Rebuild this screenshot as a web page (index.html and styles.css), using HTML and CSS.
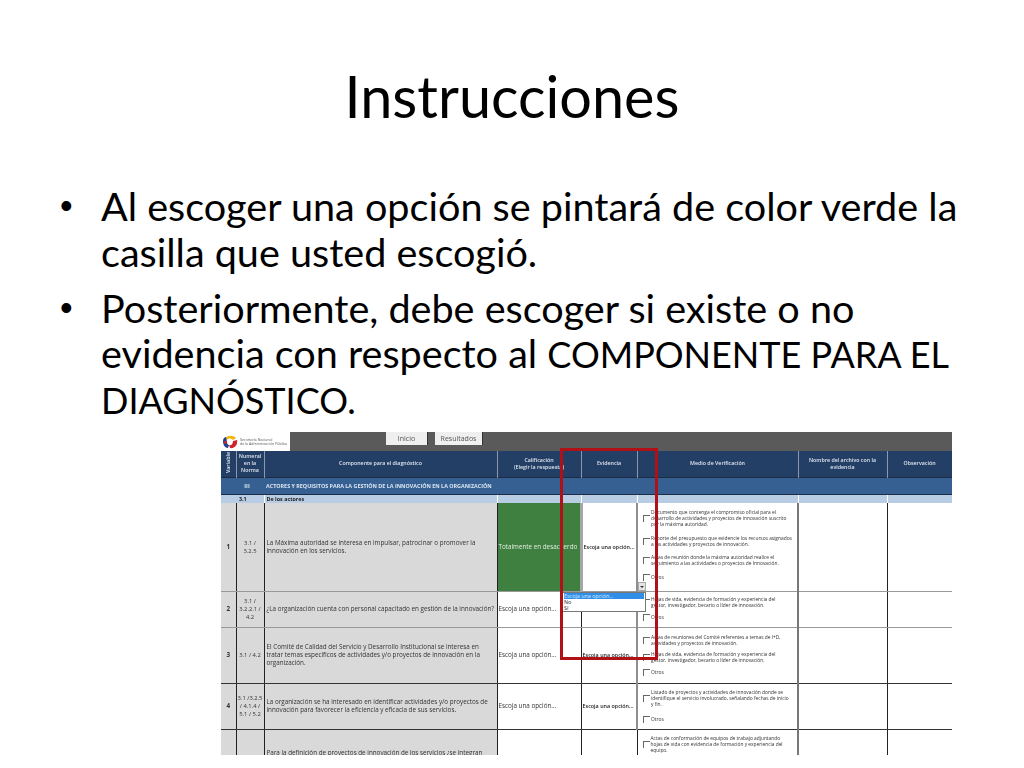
FILE: index.html
```html
<!DOCTYPE html>
<html lang="es">
<head>
<meta charset="utf-8">
<title>Instrucciones</title>
<link rel="stylesheet" href="styles.css">
</head>
<body>
<main class="slide">
  <h1 class="title">Instrucciones</h1>
  <ul class="bullets">
    <li>Al escoger una opción se pintará de color verde la casilla que usted escogió.</li>
    <li>Posteriormente, debe escoger si existe o no evidencia con respecto al <span class="caps">COMPONENTE PARA EL DIAGNÓSTICO.</span></li>
  </ul>
  <figure class="sheet">
    <div class="topbar">
      <div class="logo">
        <svg class="logo-mark" viewBox="0 0 16 14" width="16" height="14" aria-hidden="true">
          <path d="M3 4C5 0 11 0 14 3L11 5C9 3 6 3 5 5Z" fill="#f2b705"/>
          <path d="M1 6C1 3 3 2 4 2L5 7C5 9 6 10 7 10L6 13C3 13 1 10 1 6Z" fill="#1f3f94"/>
          <path d="M7 10C9 11 11 9 11 6L15 5C16 9 13 14 8 13Z" fill="#d2232a"/>
          <circle cx="3.4" cy="7.2" r="1.5" fill="#d2232a"/>
        </svg>
        <span class="logo-text">Secretaría Nacional<br>de la Administración Pública</span>
      </div>
      <div class="tabs">
        <span class="tab tab-first">Inicio</span>
        <span class="tab tab-second">Resultados</span>
      </div>
    </div>
    <table class="grid">
      <colgroup>
        <col class="c1"><col class="c2"><col class="c3"><col class="c4"><col class="c5"><col class="c6"><col class="c7"><col class="c8">
      </colgroup>
      <thead>
        <tr class="r-head">
          <th><span class="vertical">Variable</span></th>
          <th>Numeral<br>en la<br>Norma</th>
          <th>Componente para el diagnóstico</th>
          <th>Calificación<br>(Elegir la respuesta)</th>
          <th>Evidencia</th>
          <th>Medio de Verificación</th>
          <th>Nombre del archivo con la<br>evidencia</th>
          <th>Observación</th>
        </tr>
      </thead>
      <tbody>
        <tr class="r-section">
          <td colspan="2" class="sec-num sec-iii">III</td>
          <td colspan="2">ACTORES Y REQUISITOS PARA LA GESTIÓN DE LA INNOVACIÓN EN LA ORGANIZACIÓN</td>
          <td></td><td></td><td></td><td></td>
        </tr>
        <tr class="r-sub">
          <td colspan="2" class="sec-num">3.1</td>
          <td>De los actores</td>
          <td></td><td></td><td></td><td></td><td></td>
        </tr>
        <tr class="r1">
          <td class="gray num">1</td>
          <td class="gray ctr">3.1 /<br>3.2.5</td>
          <td class="gray desc">La Máxima autoridad se interesa en impulsar, patrocinar o promover la innovación en los servicios.</td>
          <td class="green">Totalmente en desacuerdo</td>
          <td class="ev">Escoja una opción...</td>
          <td class="medio">
            <div class="chk">Documento que contenga el compromiso oficial para el<br>desarrollo de actividades y proyectos de innovación suscrito<br>por la máxima autoridad.</div>
            <div class="chk">Reporte del presupuesto que evidencie los recursos asignados<br>a las actividades y proyectos de innovación.</div>
            <div class="chk">Actas de reunión donde la máxima autoridad realice el<br>seguimiento a las actividades o proyectos de Innovación.</div>
            <div class="chk">Otros</div>
          </td>
          <td></td><td></td>
        </tr>
        <tr class="r2">
          <td class="gray num">2</td>
          <td class="gray ctr">3.1 /<br>3.2.2.1 /<br>4.2</td>
          <td class="gray desc single">¿La organización cuenta con personal capacitado en gestión de la innovación?</td>
          <td class="opt">Escoja una opción...</td>
          <td class="ev">Escoja una opción...</td>
          <td class="medio">
            <div class="chk">Hojas de vida, evidencia de formación y experiencia del<br>gestor, investigador, becario o líder de innovación.</div>
            <div class="chk">Otros</div>
          </td>
          <td></td><td></td>
        </tr>
        <tr class="r3">
          <td class="gray num">3</td>
          <td class="gray ctr">3.1 / 4.2</td>
          <td class="gray desc">El Comité de Calidad del Servicio y Desarrollo Institucional se interesa en tratar temas específicos de actividades y/o proyectos de innovación en la organización.</td>
          <td class="opt">Escoja una opción...</td>
          <td class="ev">Escoja una opción...</td>
          <td class="medio">
            <div class="chk">Actas de reuniones del Comité referentes a temas de I+D,<br>actividades y proyectos de innovación.</div>
            <div class="chk">Hojas de vida, evidencia de formación y experiencia del<br>gestor, investigador, becario o líder de innovación.</div>
            <div class="chk">Otros</div>
          </td>
          <td></td><td></td>
        </tr>
        <tr class="r4">
          <td class="gray num">4</td>
          <td class="gray ctr">3.1 /3.2.5<br>/ 4.1.4 /<br>5.1 / 5.2</td>
          <td class="gray desc">La organización se ha interesado en identificar actividades y/o proyectos de innovación para favorecer la eficiencia y eficacia de sus servicios.</td>
          <td class="opt">Escoja una opción...</td>
          <td class="ev">Escoja una opción...</td>
          <td class="medio">
            <div class="chk">Listado de proyectos y actividades de innovación donde se<br>identifique el servicio involucrado, señalando fechas de inicio<br>y fin.</div>
            <div class="chk">Otros</div>
          </td>
          <td></td><td></td>
        </tr>
        <tr class="r5">
          <td class="gray"></td>
          <td class="gray"></td>
          <td class="gray desc clip">Para la definición de proyectos de innovación de los servicios ¿se integran</td>
          <td></td>
          <td></td>
          <td class="medio">
            <div class="chk">Actas de conformación de equipos de trabajo adjuntando<br>hojas de vida con evidencia de formación y experiencia del<br>equipo.</div>
          </td>
          <td></td><td></td>
        </tr>
      </tbody>
    </table>
    <div class="drop-btn"></div>
    <div class="dropdown">
      <div class="drop-on">Escoja una opción...</div>
      <div>No</div>
      <div>Sí</div>
    </div>
    <div class="redbox"></div>
  </figure>
</main>
</body>
</html>
```
FILE: styles.css
```css
* { box-sizing: border-box; }
html, body { margin: 0; padding: 0; background: #fff; }
.slide { width: 1024px; height: 768px; overflow: hidden; font-family: Lato, "Open Sans", sans-serif; color: #000; }
.title { margin: 0; padding-top: 62px; height: 183px; font-size: 57.6px; line-height: 68px; font-weight: 400; text-align: center; }
.bullets { margin: 0; padding: 0 60px 0 101px; list-style: none; font-size: 39.6px; line-height: 45.6px; }
.bullets li { position: relative; margin-bottom: 10.5px; }
.bullets li::before { content: "•"; position: absolute; left: -41px; font-family: "Liberation Sans", sans-serif; font-size: 36px; }
.caps { font-size: 36px; line-height: 1; }
.sheet { position: absolute; left: 221px; top: 432px; width: 731px; height: 323px; margin: 0; overflow: hidden; font-family: "Open Sans", sans-serif; filter: blur(0.35px); }
.topbar { display: flex; height: 19px; background: #5a5a5a; }
.logo { width: 69px; display: flex; align-items: center; gap: 2px; background: #fff; padding-left: 1px; }
.logo-text { font-size: 3.6px; line-height: 4px; color: #555; white-space: nowrap; }
.tabs { display: flex; margin-left: 96px; gap: 7px; }
.tab { height: 13px; background: #efefef; color: #555; font-size: 7px; line-height: 13px; text-align: center; border-right: 1px solid #333; }
.tab-first { width: 42px; }
.tab-second { width: 48px; }
.grid { table-layout: fixed; width: 731px; border-collapse: collapse; font-size: 6.3px; line-height: 8px; color: #333; }
.c1 { width: 15px; } .c2 { width: 28px; } .c3 { width: 233px; } .c4 { width: 84px; } .c5 { width: 56px; } .c6 { width: 161px; } .c7 { width: 89px; } .c8 { width: 65px; }
.grid th, .grid td { padding: 0 1px; overflow: hidden; }
.grid th { background: #243f66; color: #dfe6ef; font-weight: 600; font-size: 5.3px; line-height: 7px; text-align: center; border-right: 1px solid #8d99ab; }
.r-head { height: 26px; }
.vertical { display: inline-block; writing-mode: vertical-rl; transform: rotate(180deg); }
.r-section { height: 17px; }
.r-section td { background: #366092; color: #dbe5f1; font-weight: 700; font-size: 5.4px; border-top: 1px solid #1c2c44; border-bottom: 1px solid #1c2c44; white-space: nowrap; overflow: visible; padding-left: 2px; }
.r-sub { height: 9px; }
.r-sub td { background: #b8cce4; color: #222; font-weight: 700; font-size: 5.4px; line-height: 8px; border-right: 1px solid #fff; padding-left: 2px; }
.sec-num { text-align: center; }
.grid .sec-iii { padding-left: 10px; }
.r1 { height: 88px; } .r2 { height: 36px; } .r3 { height: 56px; } .r4 { height: 46px; } .r5 { height: 26px; }
.r1 td, .r2 td, .r3 td, .r4 td, .r5 td { border-right: 1px solid #222; vertical-align: middle; }
.r1 > td, .r2 > td { border-bottom: 1px solid #999; }
.r3 > td, .r4 > td { border-bottom: 1px solid #333; }
.gray { background: #d9d9d9; }
.grid td.desc { padding: 0 8px 0 2px; }
.grid td.single { white-space: nowrap; padding-right: 0; }
.grid td.ctr { text-align: center; line-height: 8px; font-size: 5.8px; white-space: nowrap; padding: 0; }
.num { text-align: center; font-weight: 700; }
.green { background: #3f7f3f; color: #e2efe2; white-space: nowrap; font-size: 6.3px; border-right: 3px solid #a6a6a6 !important; }
.opt { white-space: nowrap; font-size: 6.3px; }
.grid td.ev { font-weight: 600; white-space: nowrap; font-size: 5.4px; color: #222; border-right: 2px solid #8f8f8f; }
.grid td.medio { border-right: 2px solid #777; padding: 5px 2px 0 5px; font-size: 4.85px; line-height: 6px; color: #333; vertical-align: top; white-space: nowrap; }
.chk { position: relative; padding-left: 8px; margin-bottom: 7px; }
.chk::before { content: ""; position: absolute; left: 0; top: 50%; width: 6px; height: 6px; margin-top: -3px; border-top: 1px solid #666; border-left: 1px solid #666; }
.grid .r1 .medio { padding-top: 6px; }
.r1 .chk { margin-bottom: 7.5px; }
.grid .r2 .medio { padding-top: 4px; }
.r2 .chk { margin-bottom: 6px; }
.grid .r3 .medio { padding-top: 6px; }
.r3 .chk { margin-bottom: 5.5px; }
.r4 .chk { margin-bottom: 9px; }
.medio .chk:last-child { margin-bottom: 0; }
.r5 td { vertical-align: top; }
.grid td.clip { white-space: nowrap; padding: 19px 0 0 2px; }
.drop-btn { position: absolute; left: 417px; top: 150px; width: 8px; height: 9px; background: #e4e4e4; border: 1px solid #aaa; }
.drop-btn::after { content: ""; position: absolute; left: 1px; top: 3px; border: 2px solid transparent; border-top-color: #333; }
.dropdown { position: absolute; left: 341px; top: 160px; width: 84px; height: 20px; background: #fff; border: 1px solid #777; font-size: 5.4px; line-height: 6px; color: #222; padding: 0 1px; }
.drop-on { background: #2f8ee8; color: #dcecff; }
.redbox { position: absolute; left: 339px; top: 16px; width: 98px; height: 212px; border: 3px solid #b01116; }
```
